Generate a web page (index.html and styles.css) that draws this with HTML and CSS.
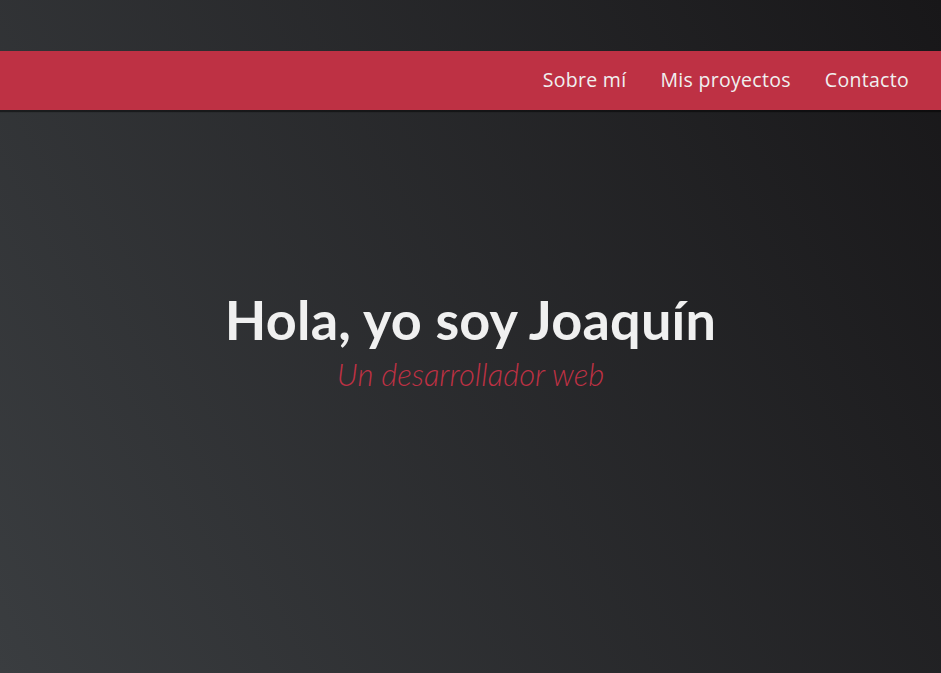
FILE: index.html
```html
<!DOCTYPE html>
<html lang="es">
<head>
<meta charset="utf-8">
<title>Joaquín</title>
<link rel="stylesheet" href="styles.css">
</head>
<body>
<div class="page">
  <nav class="nav">
    <ul class="nav-list">
      <li><a href="#about">Sobre mí</a></li>
      <li><a href="#projects">Mis proyectos</a></li>
      <li><a href="#contact">Contacto</a></li>
    </ul>
  </nav>
  <section class="welcome">
    <h1 class="title">Hola, yo soy Joaquín</h1>
    <p class="subtitle">Un desarrollador web</p>
  </section>
</div>
</body>
</html>
```
FILE: styles.css
```css
html, body {
  margin: 0;
  padding: 0;
  height: 100%;
}
body {
  background: linear-gradient(62deg, #3a3d40 0%, #181719 100%);
  font-family: "Open Sans", "Noto Sans", sans-serif;
  color: #f0f0f0;
  overflow: hidden;
}
.page {
  height: 673px;
  display: flex;
  flex-direction: column;
  padding-top: 51px;
  box-sizing: border-box;
}
.nav {
  background: #be3144;
  height: 59px;
  display: flex;
  justify-content: flex-end;
  align-items: center;
  box-shadow: 0 2px 1px rgba(0,0,0,0.45);
  padding-right: 32px;
}
.nav-list {
  list-style: none;
  margin: 0;
  padding: 0 0 2px;
  display: flex;
  gap: 34px;
}
.nav-list a {
  color: #f0f0f0;
  text-decoration: none;
  font-size: 19.5px;
  letter-spacing: 0.3px;
  font-weight: 500;
}
.welcome {
  flex: 1;
  display: flex;
  flex-direction: column;
  align-items: center;
  padding-top: 183px;
}
.title {
  margin: 0;
  font-family: "Lato", sans-serif;
  font-weight: 700;
  font-size: 54px;
  letter-spacing: 0.2px;
  line-height: 1;
  color: #f0f0f0;
}
.subtitle {
  margin: 8px 0 0;
  font-family: "Lato", sans-serif;
  font-style: italic;
  font-weight: 300;
  font-size: 31px;
  letter-spacing: 0;
  color: #be3144;
}
```
